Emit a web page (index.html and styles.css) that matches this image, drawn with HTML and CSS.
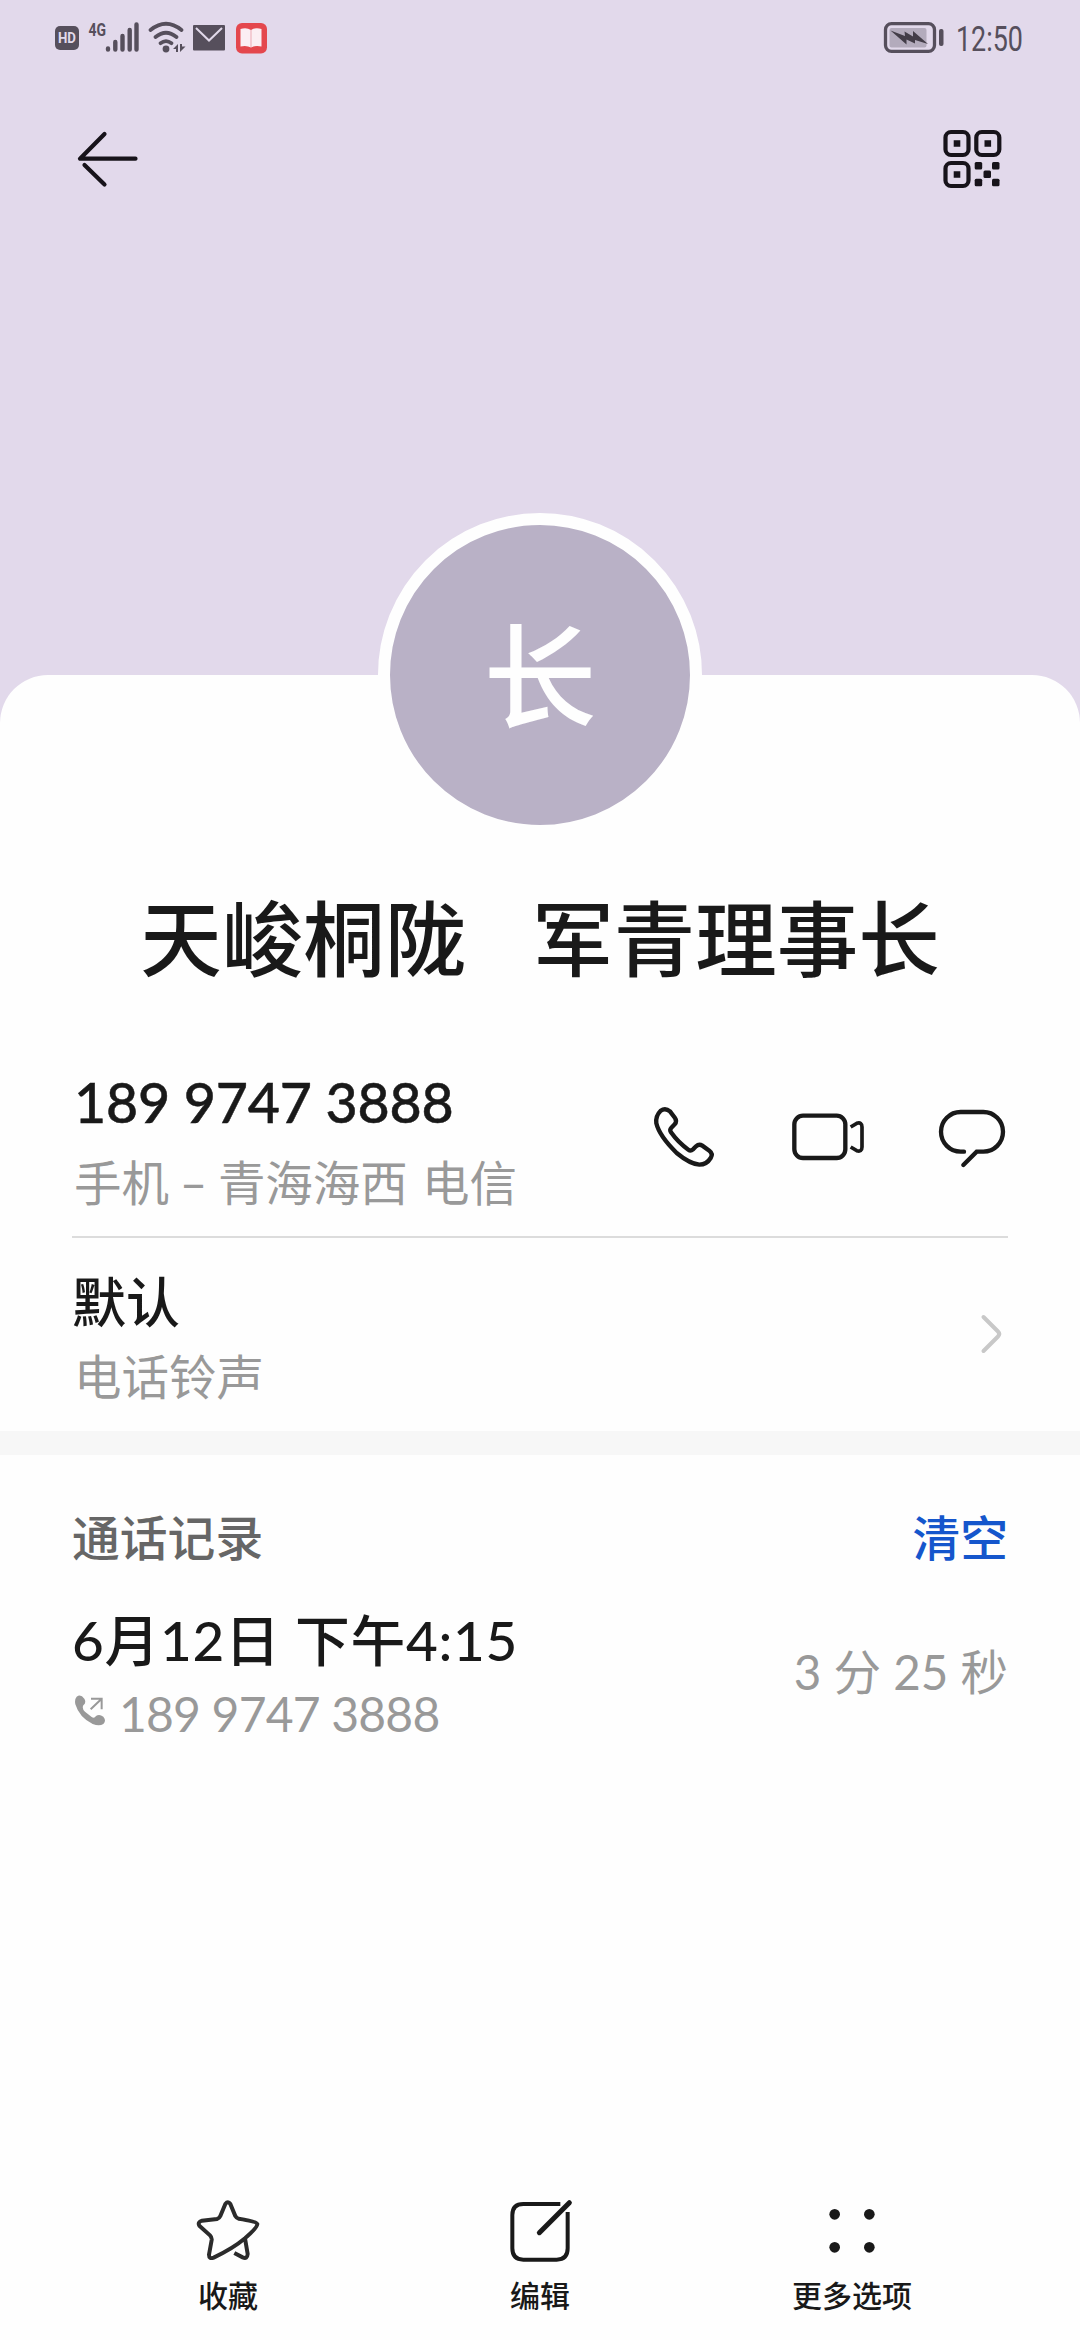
FILE: index.html
```html
<!DOCTYPE html>
<html lang="zh-CN">
<head>
<meta charset="utf-8">
<title>联系人</title>
<link rel="stylesheet" href="styles.css">
</head>
<body>
<div class="phone">
  <header class="hero">
    <div class="status">
      <svg class="status-left" width="215" height="40" viewBox="54 18 215 40">
        <rect x="55" y="26" width="24" height="24" rx="5" fill="#564f5c"/>
        <text x="58" y="43.3" class="hd" textLength="18" lengthAdjust="spacingAndGlyphs">HD</text>
        <text x="88.5" y="35.5" class="net" textLength="17.5" lengthAdjust="spacingAndGlyphs">4G</text>
        <g stroke="#564f5c" stroke-width="4.4" stroke-linecap="round" fill="none">
          <path d="M108 48.500V49.500M115.300 42V49.500M122.500 36V49.500M129.700 30V49.500M136.500 24.500V49.500"/>
          <path d="M150.500 30Q166 17.500 181.500 30M155.500 37Q166 28.500 176.500 37M160.500 43.200Q166 39 171.500 43.200" stroke-width="3.700"/>
        </g>
        <circle cx="166" cy="49" r="3.400" fill="#564f5c"/>
        <path d="M173 49L178 44V52H176V49ZM180 44H182V46.500H185.500L180 52Z" fill="#564f5c"/>
        <rect x="193" y="25" width="32" height="25.500" rx="1" fill="#564f5c"/>
        <path d="M196 28L209 40.500L222 28" fill="none" stroke="#e1d9ea" stroke-width="2"/>
        <rect x="236" y="23" width="31" height="30.500" rx="6" fill="#e4474d"/>
        <path d="M240.500 29Q246.500 27 251 30Q255.500 27 261.500 29V46.500Q255.500 45 251 47.500Q246.500 45 240.500 46.500Z" fill="#fbeef3"/>
        <path d="M251 30V47" stroke="#eba9b4" stroke-width="1"/>
      </svg>
      <div class="status-right">
        <svg width="62" height="40" viewBox="882 18 62 40">
          <rect x="885.500" y="23.700" width="49" height="27.600" rx="6" fill="none" stroke="#564f5c" stroke-width="3.300"/>
          <rect x="889.500" y="28" width="37" height="19.500" rx="2" fill="#b3abbc"/>
          <rect x="939" y="29" width="4.500" height="17" rx="2" fill="#564f5c"/>
          <path d="M890.500 30.500L905 36L904.500 31.500L913 36.500V31L928 44L915 40V43.500L906.500 39.500V44.500Z" fill="#433d48"/>
        </svg>
        <svg width="86" height="48" viewBox="946 14 86 48"><text x="956" y="50.800" class="clock" textLength="67" lengthAdjust="spacingAndGlyphs">12:50</text></svg>
      </div>
    </div>
    <nav class="nav">
      <svg width="62" height="60" viewBox="76 129 62 60" fill="none" stroke="#17131a" stroke-width="4.200" stroke-linecap="round" stroke-linejoin="round">
        <path d="M104.500 134L80 158.700H135.500M84.500 165L104.500 184.500"/>
      </svg>
      <svg width="60" height="60" viewBox="942 129 60 60">
        <g fill="none" stroke="#17131a" stroke-width="4.200">
          <rect x="945.500" y="132" width="23" height="23" rx="5.500"/>
          <rect x="976.300" y="132" width="23" height="23" rx="5.500"/>
          <rect x="945.500" y="163" width="23" height="23" rx="5.500"/>
        </g>
        <path d="M953.700 140.200h6.600v6.600h-6.600zM984.500 140.200h6.600v6.600h-6.600zM953.700 171.200h6.600v6.600h-6.600z" fill="#17131a"/>
        <g fill="#17131a">
          <rect x="974.700" y="162" width="7.500" height="7.500" rx="1.500"/><rect x="992" y="162" width="7.500" height="7.500" rx="1.500"/>
          <rect x="983.500" y="170.500" width="7.500" height="7.500" rx="1.500"/>
          <rect x="974.700" y="178.800" width="7.500" height="7.500" rx="1.500"/><rect x="992" y="178.800" width="7.500" height="7.500" rx="1.500"/>
        </g>
      </svg>
    </nav>
  </header>

  <main class="sheet">
    <div class="avatar">长</div>
    <h1 class="name">天峻桐陇   军青理事长</h1>

    <section class="row number-row">
      <div class="lines">
        <div class="number">189 9747 3888</div>
        <div class="sub place"><span class="kind">手机 – </span>青海海西 电信</div>
      </div>
      <div class="actions">
        <svg width="72" height="72" viewBox="54 72 216 216"><path d="M120 94L135 114Q142 124 134 133L124 143Q118 149 123 157Q145 188 175 209Q182 214 189 208L198 199Q207 191 217 197L238 212Q250 221 242 234Q230 254 208 254Q180 252 140 219Q88 168 79 130Q76 108 92 92Q106 82 120 94Z"/></svg>
        <svg width="76" height="72" viewBox="483 72 228 216"><rect x="493" y="107" width="153" height="127" rx="26"/><path d="M662 141L680 130Q696 125 696 141V201Q696 217 680 212L662 201" stroke-width="11"/></svg>
        <svg width="68" height="72" viewBox="924 72 204 216"><path d="M1002 215H992A59 59.500 0 0 1 992 96H1060A59 59.500 0 0 1 1060 215H1040L1000 255" stroke-linecap="round"/></svg>
      </div>
    </section>

    <section class="row ring-row">
      <div class="lines">
        <div class="title">默认</div>
        <div class="sub">电话铃声</div>
      </div>
      <svg width="26" height="44" viewBox="979 1312 26 44" fill="none" stroke="#c8c8c8" stroke-width="4" stroke-linecap="round"><path d="M983.500 1317L998 1331.500Q1000.500 1334 998 1336.500L983.500 1351"/></svg>
    </section>

    <div class="band"></div>

    <section class="log">
      <div class="log-head"><span class="log-title">通话记录</span><span class="clear">清空</span></div>
      <div class="entry">
        <div class="lines">
          <div class="title date">6月12日 下午4:15</div>
          <div class="caller">
            <svg width="32" height="32" viewBox="42 584 96 96"><path d="M50 592Q62 583 73 598Q80 610 70 618Q65 628 75 637L95 653Q103 658 108 650Q118 643 130 652Q140 664 130 674Q118 682 98 674Q58 655 46 615Q43 600 50 592Z" fill="#999"/><path d="M93 598H125V630M125 598L92 630" fill="none" stroke="#999" stroke-width="6"/></svg>
            <span>189 9747 3888</span>
          </div>
        </div>
        <div class="duration">3 分 25 秒</div>
      </div>
    </section>

    <footer class="toolbar">
      <div class="tool">
        <svg width="66" height="66" viewBox="45 54 198 198"><path stroke="#2b2b2b" d="M195 175Q233 142 232 132Q230 124 176 116Q170 115 166 108L151 72Q144 62 136 72L121 108Q118 115 111 117L66 122Q52 126 58 137L90 166Q96 172 95 180L87 224Q87 238 101 233Q160 205 195 175L203 222Q202 238 188 232L163 219"/></svg>
        <span>收藏</span>
      </div>
      <div class="tool">
        <svg width="66" height="66" viewBox="981 54 198 198"><path d="M1141 72H1030Q997 72 997 105V205Q997 239 1030 239H1130Q1163 239 1163 205V96"/><path d="M1168 68L1078 158" stroke-width="15" stroke-linecap="round"/></svg>
        <span>编辑</span>
      </div>
      <div class="tool">
        <svg width="66" height="66" viewBox="147 54 198 198"><g class="dots"><circle cx="194" cy="103" r="16"/><circle cx="298" cy="103" r="16"/><circle cx="194" cy="202" r="16"/><circle cx="298" cy="202" r="16"/></g></svg>
        <span>更多选项</span>
      </div>
    </footer>
  </main>
</div>
</body>
</html>
```
FILE: styles.css
```css
* { box-sizing: border-box; }

body {
  margin: 0;
  font-family: Lato, "Noto Sans CJK SC", sans-serif;
  color: #191919;
}

svg { display: block; flex: none; }

.phone {
  width: 1080px;
  height: 2340px;
  display: flex;
  flex-direction: column;
  background: #e2d9eb;
  overflow: hidden;
}

.hero { height: 675px; flex: none; }

.status {
  display: flex;
  justify-content: space-between;
  height: 58px;
  padding: 14px 48px 0 54px;
}
.status-left { margin-top: 4px; }
.status-right {
  display: flex;
  align-items: center;
  gap: 2px;
  height: 48px;
}
.hd { font: bold 15px Roboto, sans-serif; fill: #e1d9ea; }
.net { font: bold 19px Roboto, sans-serif; fill: #564f5c; }
.clock { font: 34.5px Roboto, sans-serif; fill: #564f5c; }

.nav {
  display: flex;
  justify-content: space-between;
  padding: 71px 78px 0 76px;
}

.sheet {
  flex: 1;
  display: flex;
  flex-direction: column;
  background: #fefefe;
  border-radius: 48px 48px 0 0;
}

.avatar {
  flex: none;
  align-self: center;
  width: 324px;
  height: 324px;
  margin-top: -162px;
  border: 12px solid #fefefe;
  border-radius: 50%;
  background: #b9b1c6;
  color: #fefefe;
  font-size: 113px;
  font-weight: 500;
  line-height: 300px;
  text-align: center;
}

.name {
  margin: 42px 0 0;
  font-size: 81.5px;
  font-weight: 500;
  line-height: 120px;
  text-align: center;
  white-space: pre;
  word-spacing: 1.5px;
}

.row {
  display: flex;
  justify-content: space-between;
  margin: 0 72px;
}
.number-row {
  height: 239px;
  padding: 67px 2px 0 0;
  border-bottom: 2px solid #dcdcdc;
}
.number {
  margin-top: 1px;
  font-size: 55.5px;
  font-weight: 500;
  line-height: 70px;
  letter-spacing: -0.2px;
  padding-left: 2px;
  -webkit-text-stroke: 0.5px #191919;
}
.sub {
  font-size: 47.5px;
  line-height: 60px;
  color: #999;
  padding-left: 2px;
}
.place { margin-top: 16px; word-spacing: 2px; }
.kind { word-spacing: -1.5px; }

.actions {
  display: flex;
  gap: 71px;
  padding-top: 38px;
  fill: none;
  stroke: #191919;
  stroke-width: 13px;
}

.ring-row {
  height: 193px;
  padding: 28px 3px 0 0;
}
.ring-row > svg { margin-top: 46px; }
.title {
  margin-top: 1px;
  font-size: 54px;
  font-weight: 500;
  line-height: 72px;
}
.ring-row .sub { margin-top: 8px; }

.band { height: 24px; background: #f7f7f7; }

.log { padding: 53px 72px 0; }
.log-head {
  display: flex;
  justify-content: space-between;
  font-size: 47.8px;
  font-weight: 500;
  line-height: 60px;
}
.log-title { color: #666; }
.clear { color: #1556cc; }

.entry {
  display: flex;
  justify-content: space-between;
  margin-top: 34px;
  color: #999;
}
.date {
  margin-top: 2px;
  font-size: 54.8px;
  letter-spacing: 0.7px;
  color: #191919;
}
.caller {
  display: flex;
  gap: 13px;
  padding: 8px 0 0 2px;
  font-size: 48px;
  line-height: 60px;
  letter-spacing: -0.8px;
}
.caller svg { margin-top: 10px; }
.duration {
  padding-top: 40px;
  font-size: 47.5px;
  line-height: 60px;
}

.toolbar {
  display: flex;
  margin: auto 72px 25px;
}
.tool {
  flex: 1;
  display: flex;
  flex-direction: column;
  align-items: center;
  gap: 11px;
  font-size: 30px;
  font-weight: 500;
  line-height: 40px;
}
.tool svg {
  fill: none;
  stroke: #191919;
  stroke-width: 12px;
}
.tool .dots { fill: #191919; stroke: none; }
```
